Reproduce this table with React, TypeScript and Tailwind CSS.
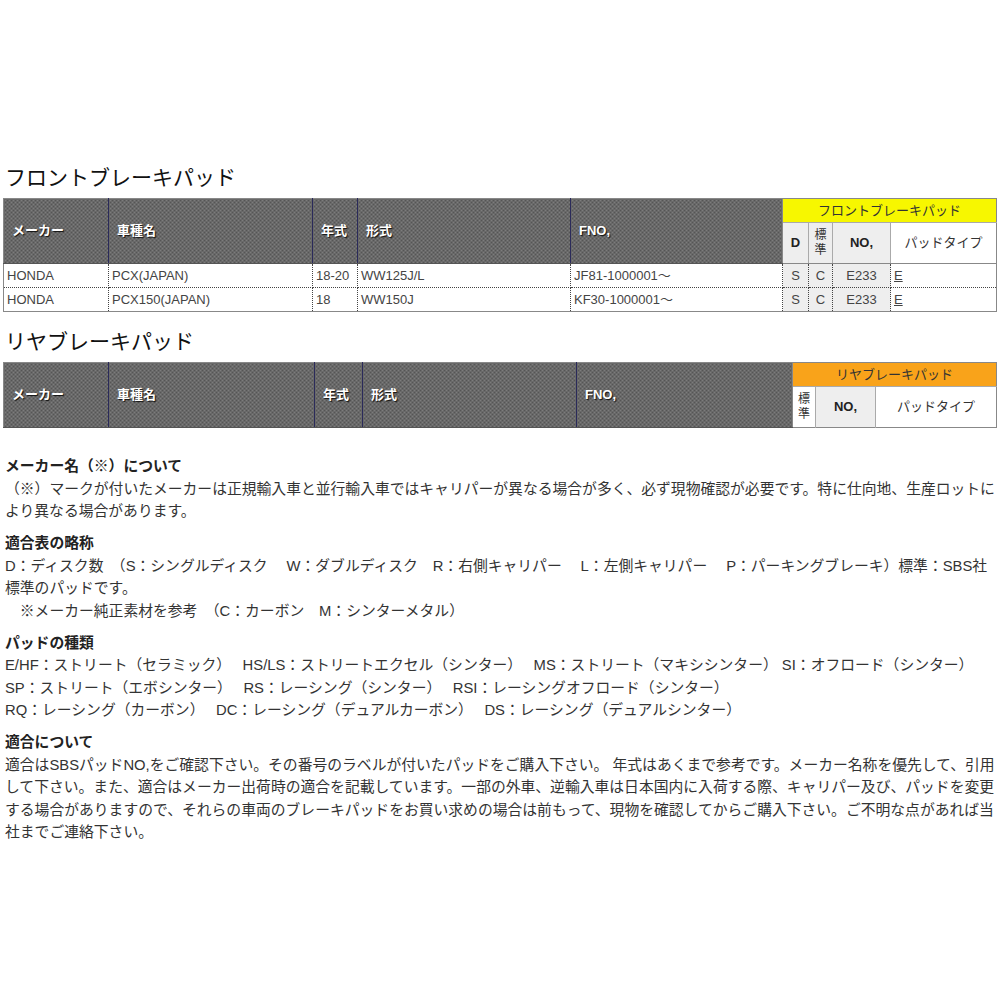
import React from "react";

const hd =
  "bg-[repeating-conic-gradient(#555555_0%_25%,#7c7c7c_0%_50%)] bg-[length:4px_4px] text-white font-bold text-[13px] [text-shadow:1px_1px_1px_#111] text-left align-middle pl-[8px] border-r border-r-[#2a2a5a] border-b border-b-[#555]";

function FrontTable() {
  const cell = "text-[13px] text-[#444] h-[24px] px-[3px] border-r border-dotted border-r-[#444] border-b border-b-[#444] whitespace-nowrap";
  const gray = "bg-[#eeeeee] text-center";
  const rows = [
    ["HONDA", "PCX(JAPAN)", "18-20", "WW125J/L", "JF81-1000001～"],
    ["HONDA", "PCX150(JAPAN)", "18", "WW150J", "KF30-1000001～"],
  ];
  return (
    <table className="table-fixed border-collapse w-[993px] ml-[3px] border border-[#888]">
      <colgroup>
        <col className="w-[105px]" />
        <col className="w-[204px]" />
        <col className="w-[45px]" />
        <col className="w-[213px]" />
        <col className="w-[212px]" />
        <col className="w-[26px]" />
        <col className="w-[24px]" />
        <col className="w-[58px]" />
        <col className="w-[106px]" />
      </colgroup>
      <thead>
        <tr className="h-[24px]">
          <th rowSpan={2} className={hd}>メーカー</th>
          <th rowSpan={2} className={hd}>車種名</th>
          <th rowSpan={2} className={hd + " pl-[6px]"}>年式</th>
          <th rowSpan={2} className={hd + " pl-[8px]"}>形式</th>
          <th rowSpan={2} className={hd + " pl-[8px] border-r-[#888]"}>FNO,</th>
          <th colSpan={4} className="bg-[#f7f700] text-[13px] font-normal text-[#333] text-center border-b border-[#aaa]">フロントブレーキパッド</th>
        </tr>
        <tr className="h-[41px]">
          <th className="bg-[#eeeeee] text-[13px] font-bold text-[#222] border-r border-[#aaa] border-b border-b-[#888]">D</th>
          <th className="bg-[#eeeeee] text-[12px] font-normal text-[#333] leading-[15px] border-r border-[#aaa] border-b border-b-[#888]">標<br />準</th>
          <th className="bg-[#eeeeee] text-[13px] font-bold text-[#222] border-r border-[#aaa] border-b border-b-[#888]">NO,</th>
          <th className="bg-white text-[13px] font-normal text-[#333] border-b border-b-[#888]">パッドタイプ</th>
        </tr>
      </thead>
      <tbody>
        {rows.map((r, i) => (
          <tr key={i} className="h-[24px]">
            {r.map((c, j) => (
              <td key={j} className={cell}>{c}</td>
            ))}
            <td className={cell + " " + gray}>S</td>
            <td className={cell + " " + gray}>C</td>
            <td className={cell + " " + gray}>E233</td>
            <td className={cell + " border-r-0"}><span className="underline">E</span></td>
          </tr>
        ))}
      </tbody>
    </table>
  );
}

function RearTable() {
  return (
    <table className="table-fixed border-collapse w-[993px] ml-[3px] border border-[#888]">
      <colgroup>
        <col className="w-[105px]" />
        <col className="w-[206px]" />
        <col className="w-[48px]" />
        <col className="w-[214px]" />
        <col className="w-[216px]" />
        <col className="w-[23px]" />
        <col className="w-[60px]" />
        <col className="w-[121px]" />
      </colgroup>
      <thead>
        <tr className="h-[24px]">
          <th rowSpan={2} className={hd}>メーカー</th>
          <th rowSpan={2} className={hd}>車種名</th>
          <th rowSpan={2} className={hd + " pl-[8px]"}>年式</th>
          <th rowSpan={2} className={hd + " pl-[8px]"}>形式</th>
          <th rowSpan={2} className={hd + " pl-[8px] border-r-[#888]"}>FNO,</th>
          <th colSpan={3} className="bg-[#f9a31a] text-[13px] font-normal text-[#333] text-center border-b border-[#aaa]">リヤブレーキパッド</th>
        </tr>
        <tr className="h-[41px]">
          <th className="bg-white text-[12px] font-normal text-[#333] leading-[15px] border-r border-[#aaa]">標<br />準</th>
          <th className="bg-[#eeeeee] text-[13px] font-bold text-[#222] border-r border-[#aaa]">NO,</th>
          <th className="bg-white text-[13px] font-normal text-[#333]">パッドタイプ</th>
        </tr>
      </thead>
    </table>
  );
}

function H({ children }: { children: React.ReactNode }) {
  return <div className="font-bold text-[#222]">{children}</div>;
}

function L({ children }: { children: React.ReactNode }) {
  return <div className="whitespace-nowrap">{children}</div>;
}

export default function App() {
  return (
    <div className="w-[1000px] h-[1000px] bg-white overflow-hidden font-['Liberation_Sans','Noto_Sans_CJK_JP',sans-serif]">
      <div className="pt-[164px]">
        <div className="text-[21px] leading-[28px] text-[#111] pl-[5px] mb-[6px]">フロントブレーキパッド</div>
        <FrontTable />
        <div className="text-[21px] leading-[28px] text-[#111] pl-[5px] mt-[16px] mb-[6px]">リヤブレーキパッド</div>
        <RearTable />
        <div className="mt-[27px] pl-[5px] text-[14.8px] leading-[22.5px] text-[#333] flex flex-col gap-[9.5px]">
          <div>
            <H>メーカー名（※）について</H>
            <L>（※）マークが付いたメーカーは正規輸入車と並行輸入車ではキャリパーが異なる場合が多く、必ず現物確認が必要です。特に仕向地、生産ロットに</L>
            <L>より異なる場合があります。</L>
          </div>
          <div>
            <H>適合表の略称</H>
            <L>D：ディスク数　（S：シングルディスク　 W：ダブルディスク　R：右側キャリパー　 L：左側キャリパー　 P：パーキングブレーキ）標準：SBS社</L>
            <L>標準のパッドです。</L>
            <L>　※メーカー純正素材を参考　（C：カーボン　M：シンターメタル）</L>
          </div>
          <div>
            <H>パッドの種類</H>
            <L>E/HF：ストリート（セラミック）　 HS/LS：ストリートエクセル（シンター）　  MS：ストリート（マキシシンター） SI：オフロード（シンター）</L>
            <L>SP：ストリート（エボシンター）　 RS：レーシング（シンター）　 RSI：レーシングオフロード（シンター）</L>
            <L>RQ：レーシング（カーボン）　 DC：レーシング（デュアルカーボン）　 DS：レーシング（デュアルシンター）</L>
          </div>
          <div>
            <H>適合について</H>
            <L>適合はSBSパッドNO,をご確認下さい。その番号のラベルが付いたパッドをご購入下さい。 年式はあくまで参考です。メーカー名称を優先して、引用</L>
            <L>して下さい。また、適合はメーカー出荷時の適合を記載しています。一部の外車、逆輸入車は日本国内に入荷する際、キャリパー及び、パッドを変更</L>
            <L>する場合がありますので、それらの車両のブレーキパッドをお買い求めの場合は前もって、現物を確認してからご購入下さい。ご不明な点があれば当</L>
            <L>社までご連絡下さい。</L>
          </div>
        </div>
      </div>
    </div>
  );
}
